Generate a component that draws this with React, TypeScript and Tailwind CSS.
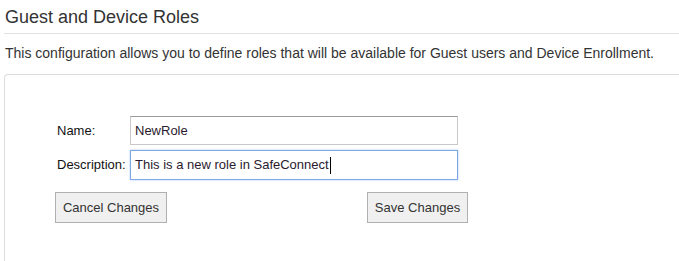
export default function App() {
  return (
    <div className="h-[261px] w-[679px] overflow-hidden bg-white pl-[4px] font-['Liberation_Sans',Arial,sans-serif] text-[#333]">
      <h1 className="box-border h-[34px] border-b border-[#e2e2e2] pl-[1px] pt-[7px] text-[18px] font-normal leading-[20px] text-[#333]">
        Guest and Device Roles
      </h1>
      <p className="box-border h-[40px] pl-[1px] pt-[10px] text-[14px] leading-[18px]">
        This configuration allows you to define roles that will be available for Guest users and Device Enrollment.
      </p>

      <div className="box-border h-[190px] rounded-tl-[4px] border-l border-t border-[#dddddd] pl-[50px] pt-[41px]">
        <div className="flex flex-col gap-[5px]">
          <div className="flex items-center">
            <label className="w-[75px] pl-[2px] text-[13px] text-[#111]">Name:</label>
            <div className="box-border flex h-[29px] w-[328px] items-center border border-[#c8c8c8] border-t-[#9a9a9a] px-[4px] text-[13px] text-[#2a1a2e]">
              NewRole
            </div>
          </div>
          <div className="flex items-center">
            <label className="w-[75px] pl-[2px] text-[13px] text-[#111]">Description:</label>
            <div className="box-border flex h-[30px] w-[328px] items-center border border-[#7ea7e6] px-[4px] text-[13px] text-[#2a1a2e] shadow-[0_0_2px_#a9c8f3]">
              This is a new role in SafeConnect
              <span className="ml-px inline-block h-[17px] w-px bg-black" />
            </div>
          </div>
        </div>

        <div className="mt-[12px] flex">
          <button className="box-border h-[31px] w-[112px] border border-[#b0b0b0] bg-[#f0f0f0] text-[13px] text-[#333]">
            Cancel Changes
          </button>
          <button className="ml-[200px] box-border h-[31px] w-[101px] border border-[#b0b0b0] bg-[#f0f0f0] text-[13px] text-[#333]">
            Save Changes
          </button>
        </div>
      </div>
    </div>
  );
}
